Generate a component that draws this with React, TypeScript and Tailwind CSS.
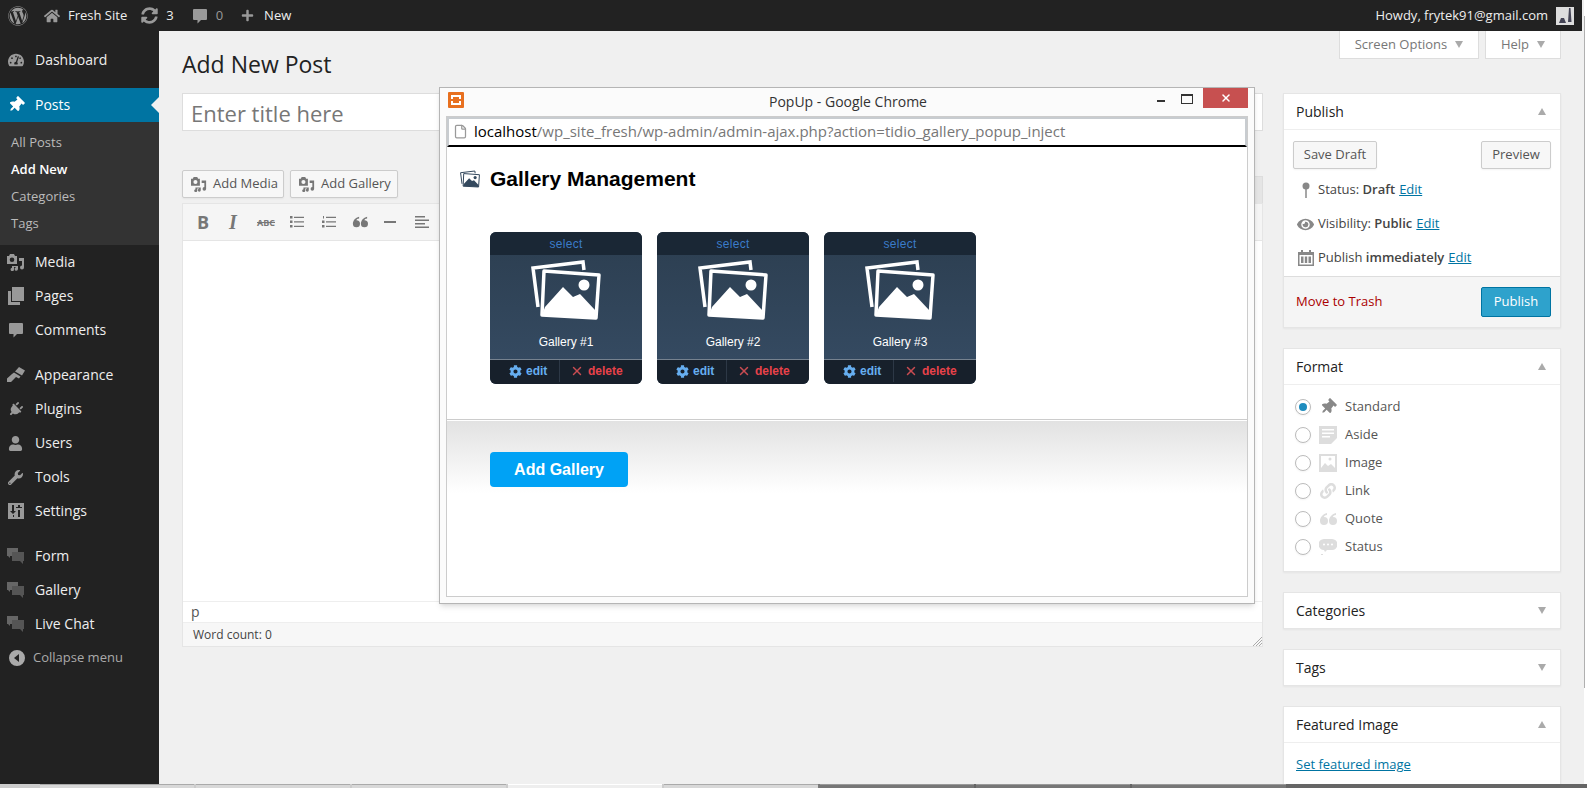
import { ReactNode } from "react";
import { File, X } from "lucide-react";
import {
  FaCog,
  FaEye,
  FaHome,
  FaLink,
  FaPlug,
  FaPlus,
  FaSyncAlt,
  FaTachometerAlt,
  FaThumbtack,
  FaUser,
  FaWordpress,
  FaWrench,
} from "react-icons/fa";

const small = "text-[13px]";
const btn = "flex h-7 items-center rounded-xs border border-[#ccc] bg-[#f7f7f7] text-[#555] shadow-xs";

function MediaIcon({ className }: { className?: string }) {
  return (
    <svg viewBox="0 0 18 18" fill="currentColor" className={className}>
      <path fillRule="evenodd" d="M0 3h2l1-2h4l1 2h2v8H0V3zm5 1.500a2.300 2.300 0 1 0 0 4.600 2.300 2.300 0 0 0 0-4.600z" />
      <path d="M12 5h5v9.500a2 2 0 1 1-2-2V8h-3V5zM5 13h6v3a1.700 1.700 0 1 1-2-1.700V14H7v2.500a1.700 1.700 0 1 1-2-1.700V13z" />
    </svg>
  );
}

function ChatsIcon({ className }: { className?: string }) {
  return (
    <svg viewBox="0 0 18 18" className={className}>
      <path fill="#666" d="M0 1h11v8H3v2L1 9H0V1z" />
      <path fill="#555" d="M5 5h12v9h-1v3l-3-3H5V5z" />
    </svg>
  );
}

function BubbleIcon({ className }: { className?: string }) {
  return (
    <svg viewBox="0 0 16 16" fill="currentColor" className={className}>
      <path d="M2 1h12a1 1 0 0 1 1 1v9a1 1 0 0 1-1 1H9l-3.500 3.500V12H2a1 1 0 0 1-1-1V2a1 1 0 0 1 1-1z" />
    </svg>
  );
}

function BrushIcon({ className }: { className?: string }) {
  return (
    <svg viewBox="0 0 18 16" fill="currentColor" className={className}>
      <path d="M12 0l6 3.500-3 5L8 4.500zM7 5.500l6.500 4-1.500 2-3-1.500-5 5H0v-3.500l5-4.500z" />
    </svg>
  );
}

function SlidersIcon({ className }: { className?: string }) {
  return (
    <svg viewBox="0 0 18 18" className={className}>
      <path
        fill="currentColor"
        fillRule="evenodd"
        d="M1 1h16v16H1V1zm4 2v6H3l3 3 3-3H7V3H5zm1 10v2h1v-2H6zm5-10v2H9v1h6V5h-2V3h-2zm0 5v7h2V8h-2z"
      />
    </svg>
  );
}

function CollapseIcon({ className }: { className?: string }) {
  return (
    <svg viewBox="0 0 16 16" className={className}>
      <path fill="currentColor" fillRule="evenodd" d="M8 0a8 8 0 1 1 0 16A8 8 0 0 1 8 0zm2 4L5 8l5 4V4z" />
    </svg>
  );
}

function PhotosIcon({ className }: { className?: string }) {
  return (
    <svg viewBox="0 0 70 60" fill="none" stroke="currentColor" className={className}>
      <path d="M7 47 2 8l50-6 1 8" strokeWidth="3.5" />
      <path d="m13 11 55 4-3 43-54-3z" strokeWidth="3.500" strokeLinejoin="round" />
      <path d="M14 47 32 27l10 10 7-3 15 16 1 8-54-3z" fill="currentColor" stroke="none" />
      <circle cx="53" cy="25" r="5.5" fill="currentColor" stroke="none" />
    </svg>
  );
}

function AsideIcon() {
  return (
    <svg viewBox="0 0 18 18" className="h-4.5 w-4.5 text-[#ddd]">
      <path fill="currentColor" fillRule="evenodd" d="M0 0h18v12l-6 6H0V0zm3 3v1.500h12V3H3zm0 3.500V8h12V6.500H3zm0 3.500v1.500h8V10H3z" />
    </svg>
  );
}

function ImageIcon() {
  return (
    <svg viewBox="0 0 18 18" className="h-4.5 w-4.5 text-[#ddd]">
      <path fill="currentColor" fillRule="evenodd" d="M0 0h18v18H0V0zm2 2v12l4-5 3 3 3-2 4 4V2H2zm9 1.500a1.500 1.500 0 1 1 0 3 1.500 1.500 0 0 1 0-3z" />
    </svg>
  );
}

function QuoteIcon({ className }: { className?: string }) {
  return (
    <svg viewBox="0 0 18 14" fill="currentColor" className={className}>
      <path d="M8 1C4 2 1 5 1 9a4 4 0 1 0 4-4c0-1 1-2 3-2V1zM17 1c-4 1-7 4-7 8a4 4 0 1 0 4-4c0-1 1-2 3-2V1z" />
    </svg>
  );
}

function StatusIcon() {
  return (
    <svg viewBox="0 0 18 18" className="h-4.5 w-4.5 text-[#ddd]">
      <path
        fill="currentColor"
        fillRule="evenodd"
        d="M5 1h8a5 5 0 0 1 0 11H8l-2 2-1-2A5.500 5.500 0 0 1 5 1zm0 4.500a1 1 0 1 0 0 2 1 1 0 0 0 0-2zm4 0a1 1 0 1 0 0 2 1 1 0 0 0 0-2zm4 0a1 1 0 1 0 0 2 1 1 0 0 0 0-2zM2 16h2v1H2z"
      />
    </svg>
  );
}

function PagesIcon() {
  return (
    <svg viewBox="0 0 18 18" className="h-4.5 w-4.5">
      <path fill="currentColor" fillRule="evenodd" d="M5 0h12v14H5V0zM1 4h3v11h9v3H1V4z" />
    </svg>
  );
}

function MenuItem({ icon, label, active }: { icon: ReactNode; label: string; active?: boolean }) {
  return (
    <div className={`relative flex h-8.5 items-center text-sm ${active ? "bg-[#0074a2] text-white" : "text-[#eee]"}`}>
      <span className={`flex w-8.75 justify-center pr-1 ${active ? "text-white" : "text-[#999]"}`}>{icon}</span>
      {label}
      {active && (
        <span className="absolute right-0 h-0 w-0 border-y-8 border-r-8 border-y-transparent border-r-[#f0f0f0]" />
      )}
    </div>
  );
}

function Sidebar() {
  return (
    <nav className="flex w-[159px] shrink-0 flex-col bg-[#222] pt-3">
      <MenuItem icon={<FaTachometerAlt size={16} />} label="Dashboard" />
      <div className="mt-2.75">
        <MenuItem active icon={<FaThumbtack size={16} className="rotate-45" />} label="Posts" />
        <div className={`bg-[#333] pb-2 pl-2.75 pt-1.75 ${small} text-[#bbb]`}>
          <div className="flex h-6.75 items-center">All Posts</div>
          <div className="flex h-6.75 items-center font-semibold text-white">Add New</div>
          <div className="flex h-6.75 items-center">Categories</div>
          <div className="flex h-6.75 items-center">Tags</div>
        </div>
      </div>
      <MenuItem icon={<MediaIcon className="h-4.5 w-4.5" />} label="Media" />
      <MenuItem icon={<PagesIcon />} label="Pages" />
      <MenuItem icon={<BubbleIcon className="h-4 w-4" />} label="Comments" />
      <div className="mt-2.75">
        <MenuItem icon={<BrushIcon className="h-4 w-4.5" />} label="Appearance" />
        <MenuItem icon={<FaPlug size={15} className="rotate-45" />} label="Plugins" />
        <MenuItem icon={<FaUser size={15} />} label="Users" />
        <MenuItem icon={<FaWrench size={15} />} label="Tools" />
        <MenuItem icon={<SlidersIcon className="h-4.5 w-4.5" />} label="Settings" />
      </div>
      <div className="mt-2.75">
        <MenuItem icon={<ChatsIcon className="h-4.5 w-4.5" />} label="Form" />
        <MenuItem icon={<ChatsIcon className="h-4.5 w-4.5" />} label="Gallery" />
        <MenuItem icon={<ChatsIcon className="h-4.5 w-4.5" />} label="Live Chat" />
      </div>
      <div className={`flex h-8.5 items-center gap-2 pl-2.25 ${small} text-[#aaa]`}>
        <CollapseIcon className="h-4 w-4 text-[#aaa]" />
        Collapse menu
      </div>
    </nav>
  );
}

function AdminBar() {
  return (
    <header className={`mr-0.5 flex h-[31px] shrink-0 items-center justify-between bg-[#222] pl-2 pr-2 ${small} text-[#eee]`}>
      <div className="flex items-center">
        <FaWordpress size={20} className="text-[#999]" />
        <FaHome size={16} className="ml-4 text-[#999]" />
        <span className="ml-2">Fresh Site</span>
        <FaSyncAlt size={17} className="ml-3.5 text-[#999]" />
        <span className="ml-2">3</span>
        <BubbleIcon className="ml-4.5 h-4 w-4 text-[#999]" />
        <span className="ml-2 text-[#999]">0</span>
        <FaPlus size={13} className="ml-4.5 text-[#999]" />
        <span className="ml-2.5">New</span>
      </div>
      <div className="flex items-center gap-2">
        Howdy, frytek91@gmail.com
        <svg viewBox="0 0 18 18" className="h-4.5 w-4.5">
          <rect width="18" height="18" fill="#ddd" />
          <path d="M13 1h1.500l1 14H12zM5 11h3l2 5H3z" fill="#445" />
        </svg>
      </div>
    </header>
  );
}

function Toolbar() {
  return (
    <div className="flex h-9.25 items-center border-b border-[#e5e5e5] bg-[#f5f5f5] pl-3.5 text-[#777]">
      <span className="w-8 text-lg font-bold leading-none">B</span>
      <span className="w-7 font-['Liberation_Serif',serif] text-xl font-bold italic leading-none">I</span>
      <span className="w-8.25 text-[9px] font-bold leading-none line-through">ABC</span>
      <svg viewBox="0 0 14 12" className="mr-[18px] h-3 w-3.5" fill="currentColor">
        <path d="M0 0h2.500v2.500H0zM0 4.500h2.500V7H0zM0 9h2.500v2.500H0zM4 .8h10V2H4zM4 5.300h10v1.200H4zM4 9.800h10V11H4z" />
      </svg>
      <svg viewBox="0 0 14 12" className="mr-4 h-3 w-3.5" fill="currentColor">
        <path d="M1 0h1v2.500H1zM0 4.500h2.500V7H0zM0 9h2.500v2.500H0zM4 .8h10V2H4zM4 5.300h10v1.200H4zM4 9.800h10V11H4z" />
      </svg>
      <QuoteIcon className="mr-4 h-3.5 w-4" />
      <span className="mr-[19px] h-0.5 w-3 bg-[#777]" />
      <svg viewBox="0 0 14 12" className="h-3 w-3.5" fill="currentColor">
        <path d="M0 0h10v1.500H0zM0 3.500h14V5H0zM0 7h10v1.500H0zM0 10.500h14V12H0z" />
      </svg>
    </div>
  );
}

function Editor() {
  return (
    <div className="flex min-w-0 flex-1 flex-col pt-5.25">
      <h1 className="text-[23px] leading-6 text-[#222]">Add New Post</h1>
      <div className="mt-4.25 flex h-9.5 shrink-0 items-center border border-[#ddd] bg-white pl-2 pt-0.5 text-[22px] text-[#777]">
        Enter title here
      </div>
      <div className="mt-9.75 flex justify-between">
        <div className={`flex items-start gap-1.5 ${small}`}>
          <button className={`${btn} w-25.5 gap-1.5 pl-2`}>
            <MediaIcon className="h-4 w-4 text-[#777]" />
            Add Media
          </button>
          <button className={`${btn} w-27 gap-1.5 pl-2`}>
            <MediaIcon className="h-4 w-4 text-[#777]" />
            Add Gallery
          </button>
        </div>
        <div className="mt-1.5 h-6.75 w-12 border border-b-0 border-[#ddd] bg-[#e5e5e5]" />
      </div>
      <div className="flex flex-col border border-[#e5e5e5] bg-white">
        <Toolbar />
        <div className="h-90" />
        <div className="flex h-5.5 items-center border-y border-[#eee] pl-2 text-sm text-[#555]">p</div>
        <div className="relative flex h-5.75 items-center bg-[#f7f7f7] pl-2.5 text-xs text-[#444]">
          Word count: 0
          <svg viewBox="0 0 10 10" className="absolute bottom-0 right-0 h-2.5 w-2.5" stroke="#aaa">
            <path d="M10 1 1 10M10 4 4 10M10 7 7 10" />
          </svg>
        </div>
      </div>
    </div>
  );
}

function Box({ title, open, children }: { title: string; open?: boolean; children?: ReactNode }) {
  return (
    <section className="border border-[#e5e5e5] bg-white shadow-xs">
      <div className={`flex items-center justify-between px-3 ${open ? "h-9 border-b border-[#eee]" : "h-8.75"}`}>
        <h3 className="text-sm text-[#222]">{title}</h3>
        <span
          className={`mr-0.5 h-0 w-0 border-x-4 border-x-transparent ${
            open ? "border-b-[7px] border-b-[#aaa]" : "border-t-[7px] border-t-[#aaa]"
          }`}
        />
      </div>
      {children}
    </section>
  );
}

function PublishRow({ icon, children }: { icon: ReactNode; children: ReactNode }) {
  return (
    <div className={`flex h-8.5 items-center ${small} text-[#444]`}>
      <span className="flex w-6.25 justify-center text-[#888]">{icon}</span>
      {children}
    </div>
  );
}

function FormatRow({ icon, label, checked }: { icon: ReactNode; label: string; checked?: boolean }) {
  return (
    <div className={`flex h-7 items-center ${small} text-[#555]`}>
      <span className="flex h-4 w-4 items-center justify-center rounded-full border border-[#bbb] bg-white shadow-xs">
        {checked && <span className="h-2 w-2 rounded-full bg-[#1e8cbe]" />}
      </span>
      <span className="ml-2 flex w-4.5 justify-center">{icon}</span>
      <span className="ml-2">{label}</span>
    </div>
  );
}

function Edit() {
  return <a className="ml-1 text-[#0074a2] underline">Edit</a>;
}

function RightColumn() {
  return (
    <aside className="flex w-[278px] shrink-0 flex-col">
      <div className={`mb-8.5 flex h-7 shrink-0 justify-end gap-1.5 ${small} text-[#777]`}>
        <div className="flex w-35 items-center justify-center gap-2 border border-t-0 border-[#ddd] bg-white">
          Screen Options
          <span className="h-0 w-0 border-x-4 border-t-[7px] border-x-transparent border-t-[#aaa]" />
        </div>
        <div className="flex w-19 items-center justify-center gap-2 border border-t-0 border-[#ddd] bg-white">
          Help
          <span className="h-0 w-0 border-x-4 border-t-[7px] border-x-transparent border-t-[#aaa]" />
        </div>
      </div>
      <div className="flex shrink-0 flex-col gap-5">
        <Box title="Publish" open>
          <div className="px-2.25 pt-2.75">
            <div className={`flex justify-between ${small}`}>
              <button className={`${btn} w-21 justify-center`}>Save Draft</button>
              <button className={`${btn} w-17.5 justify-center`}>Preview</button>
            </div>
            <div className="mt-1 pb-0.25">
              <PublishRow
                icon={
                  <svg viewBox="0 0 12 16" className="h-4 w-3">
                    <circle cx="6" cy="4" r="3.500" fill="currentColor" />
                    <path d="M6 7v9" stroke="currentColor" strokeWidth="1.500" />
                  </svg>
                }
              >
                <span>Status: <b className="font-semibold">Draft</b></span>
                <Edit />
              </PublishRow>
              <PublishRow icon={<FaEye size={17} />}>
                <span>Visibility: <b className="font-semibold">Public</b></span>
                <Edit />
              </PublishRow>
              <PublishRow
                icon={
                  <svg viewBox="0 0 16 16" className="h-4 w-4">
                    <path fill="currentColor" fillRule="evenodd" d="M3 0h2v2h6V0h2v2h3v14H0V2h3V0zM1.500 5v9.500h13V5h-13zM3 6.500h2.500V13H3zm3.800 0h2.400V13H6.800zm3.700 0H13V13h-2.500z" />
                  </svg>
                }
              >
                <span>Publish <b className="font-semibold">immediately</b></span>
                <Edit />
              </PublishRow>
            </div>
          </div>
          <div className={`flex h-12.75 items-center justify-between border-t border-[#ddd] bg-[#f5f5f5] pl-3 pr-2.25 ${small}`}>
            <a className="text-[#a00]">Move to Trash</a>
            <button className="h-7.5 w-17.5 rounded-xs border border-[#0074a2] bg-[#2ea2cc] text-white">Publish</button>
          </div>
        </Box>
        <Box title="Format" open>
          <div className="px-2.75 pb-2.5 pt-2">
            <FormatRow checked label="Standard" icon={<FaThumbtack size={16} className="rotate-45 text-[#888]" />} />
            <FormatRow label="Aside" icon={<AsideIcon />} />
            <FormatRow label="Image" icon={<ImageIcon />} />
            <FormatRow label="Link" icon={<FaLink size={16} className="text-[#ddd]" />} />
            <FormatRow label="Quote" icon={<QuoteIcon className="h-4 w-4.5 text-[#ddd]" />} />
            <FormatRow label="Status" icon={<StatusIcon />} />
          </div>
        </Box>
        <Box title="Categories" />
        <Box title="Tags" />
        <Box title="Featured Image" open>
          <div className={`px-3 py-3 ${small} text-[#0074a2] underline`}>Set featured image</div>
        </Box>
      </div>
    </aside>
  );
}

function GalleryCard({ n }: { n: number }) {
  return (
    <div className="flex h-38 w-38 flex-col overflow-hidden rounded-md bg-linear-to-b from-[#2c3e50] to-[#364c64]">
      <div className="flex h-5.75 items-center justify-center bg-[#1a2735] text-xs tracking-wide text-[#3b7cc9]">select</div>
      <PhotosIcon className="mx-auto mt-1.25 h-15 w-17.5 text-white" />
      <div className="mt-3.5 text-center text-xs text-white">Gallery #{n}</div>
      <div className="mt-auto flex h-6.25 border-t border-[#76828f] bg-[#17202b] pb-0.5 text-xs font-bold">
        <div className="flex w-17.5 items-center gap-1 border-r border-[#2d3846] pl-4.75 text-[#66aef0]">
          <FaCog size={13} />
          edit
        </div>
        <div className="flex flex-1 items-center gap-1 pl-2.5 text-[#e8424a]">
          <X size={14} strokeWidth={2.5} className="text-[#c94c52]" />
          delete
        </div>
      </div>
    </div>
  );
}

function PopupWindow() {
  return (
    <div className="absolute left-[439px] top-[87px] flex h-[517px] w-[816px] flex-col border border-[#b5b5b5] bg-[#fbfbfb] shadow-md">
      <div className="flex h-7 shrink-0 items-start text-sm text-[#333]">
        <div className="flex flex-1 pl-2 pt-1">
          <svg viewBox="0 0 16 16" className="h-4 w-4">
            <rect width="16" height="16" rx="1" fill="#e8701f" />
            <path d="M4 4h8v8H4z" fill="none" stroke="#fff" strokeWidth="2" />
            <path d="M3 8h10" stroke="#e8701f" strokeWidth="2" />
          </svg>
        </div>
        <div className="pt-1">PopUp - Google Chrome</div>
        <div className="flex flex-1 justify-end pr-1.5">
          <span className="mr-4 mt-3 h-0.5 w-2 bg-[#333]" />
          <span className="mr-2.5 mt-1.5 h-2.5 w-3 border border-t-2 border-[#333]" />
          <span className="flex h-5 w-11.25 items-center justify-center bg-[#c75050] text-white">
            <X size={12} strokeWidth={3} />
          </span>
        </div>
      </div>
      <div className="mx-1.5 mb-1.5 flex flex-1 flex-col border border-[#ccc] bg-white font-['Liberation_Sans',Arial,sans-serif]">
        <div className="flex h-7.5 shrink-0 items-center gap-1.5 border-2 border-[#c8ccd0] border-b-black pb-0.5 pl-1 font-['Open_Sans',sans-serif] text-[15px] text-[#777]">
          <File size={15} className="text-[#999]" />
          <span><span className="text-black">localhost</span>/wp_site_fresh/wp-admin/admin-ajax.php?action=tidio_gallery_popup_inject</span>
        </div>
        <div className="h-68 shrink-0 pl-3.25 pt-5">
          <div className="flex h-6 items-center gap-2.5">
            <PhotosIcon className="h-4.5 w-5 text-[#34495e]" />
            <h2 className="text-[21px] font-bold text-black">Gallery Management</h2>
          </div>
          <div className="ml-7.5 mt-10.25 flex gap-3.75">
            <GalleryCard n={1} />
            <GalleryCard n={2} />
            <GalleryCard n={3} />
          </div>
        </div>
        <div className="border-t border-[#ccc] pt-px">
          <div className="h-18 bg-linear-to-b from-[#e2e2e2] to-white pl-10.75 pt-7.75">
            <button className="h-8.75 w-34.5 rounded-sm bg-[#00a2f5] text-base font-bold text-white">Add Gallery</button>
          </div>
        </div>
      </div>
    </div>
  );
}

function Taskbar() {
  return (
    <div className="flex h-1 shrink-0 gap-0.5 bg-linear-to-r from-[#ccc] from-50% to-[#666] to-52% pl-10">
      {[0, 1, 2, 3, 4, 5, 6, 7].map((i) => (
        <div key={i} className={`w-38.5 border-t ${i === 3 ? "border-white bg-[#eee]" : i < 5 ? "border-[#aaa] bg-[#d8d8d8]" : "border-[#999] bg-[#777]"}`} />
      ))}
    </div>
  );
}

export default function App() {
  return (
    <div className="relative flex h-screen w-screen flex-col overflow-hidden bg-white font-['Open_Sans',sans-serif]">
      <div className="flex min-h-0 flex-1">
        <div className="flex min-w-0 flex-1 flex-col bg-[#f0f0f0]">
          <AdminBar />
          <div className="flex min-h-0 flex-1">
            <Sidebar />
            <main className="flex min-w-0 flex-1 gap-5 overflow-hidden pl-[23px] pr-[23px]">
              <Editor />
              <RightColumn />
            </main>
          </div>
        </div>
        <div className="w-0.75">
          <div className="mt-4 h-168 w-px bg-[#b0b0b0]" />
        </div>
      </div>
      <Taskbar />
      <PopupWindow />
    </div>
  );
}
